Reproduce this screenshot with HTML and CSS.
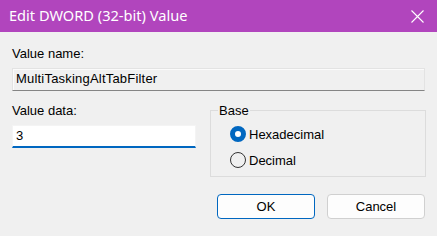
FILE: index.html
```html
<html>
<head>
	<title>Edit DWORD (32-bit) Value</title>
	<meta http-equiv="Content-Type" content="text/html; charset=utf-8" />
	<link rel="stylesheet" href="styles.css">
</head>
<body>
	<div class='dialog'>
		<div class='title_bar'>
			<span class='title'>Edit DWORD (32-bit) Value</span>
			<span class='close_btn'>
				<svg width="13" height="13" viewBox="0 0 13 13"><path d="M0.5 0.5 L12.5 12.5 M12.5 0.5 L0.5 12.5" stroke="#fff" stroke-width="1.1" fill="none"/></svg>
			</span>
		</div>
		<div class='content'>
			<div class='label first_label'>Value name:</div>
			<div class='name_field'>MultiTaskingAltTabFilter</div>

			<div class='data_row'>
				<div class='data_col'>
					<div class='label'>Value data:</div>
					<div class='data_field'>3</div>
				</div>
				<fieldset class='base_box'>
					<legend>Base</legend>
					<div class='radio_row'><span class='radio checked'></span>Hexadecimal</div>
					<div class='radio_row'><span class='radio'></span>Decimal</div>
				</fieldset>
			</div>

			<div class='buttons'>
				<div class='button default_button'>OK</div>
				<div class='button'>Cancel</div>
			</div>
		</div>
	</div>
</body>
</html>
```

FILE: styles.css
```css
body { margin: 0; background-color: #f0f0f0; }
.dialog { width: 437px; height: 236px; background-color: #f0f0f0; font-family: "Liberation Sans", Arial, sans-serif; font-size: 13px; line-height: 15px; color: #000; overflow: hidden; }
.title_bar { height: 32px; background-color: #b145bd; display: flex; align-items: center; justify-content: space-between; padding: 0 13px 0 9px; }
.title { color: #fff; font-family: "Noto Sans", sans-serif; font-size: 14.6px; margin-top: -2px; }
.close_btn { display: flex; margin-top: 1px; }
.content { padding: 0 12px; }
.label { height: 15px; }
.first_label { padding-top: 14px; }
.name_field { margin-top: 7px; height: 19px; line-height: 19px; padding: 0 0 2px 3px; border: 1px solid #e3e3e3; border-bottom-color: #858585; box-shadow: inset 1px 1px 0 #fbfbfb; letter-spacing: 0.2px; }
.data_row { display: flex; margin-top: 12px; }
.data_col { width: 184px; }
.data_field { margin-top: 7px; height: 20px; line-height: 19px; padding: 0 0 0 3px; background-color: #fff; border: 1px solid #f4f4f4; border-bottom: 2px solid #0067c0; }
.base_box { margin: 0 -1px 0 14px; flex: 1; border: 1px solid #dcdcdc; padding: 3px 0 3px 7px; }
.base_box legend { padding: 0 1px; line-height: 15px; }
.radio_row { display: flex; align-items: center; height: 26px; }
.radio { width: 14px; height: 14px; border: 1px solid #333; border-radius: 50%; margin: 0 3px 0 12px; background-color: #f0f0f0; box-sizing: content-box; }
.radio.checked { width: 6px; height: 6px; border: 5px solid #0067c0; background-color: #fff; }
.buttons { display: flex; justify-content: flex-end; gap: 12px; margin-top: 17px; }
.button { width: 96px; height: 23px; line-height: 23px; text-align: center; background-color: #fdfdfd; border: 1px solid #d0d0d0; border-radius: 4px; }
.default_button { border-color: #0067c0; }
```
